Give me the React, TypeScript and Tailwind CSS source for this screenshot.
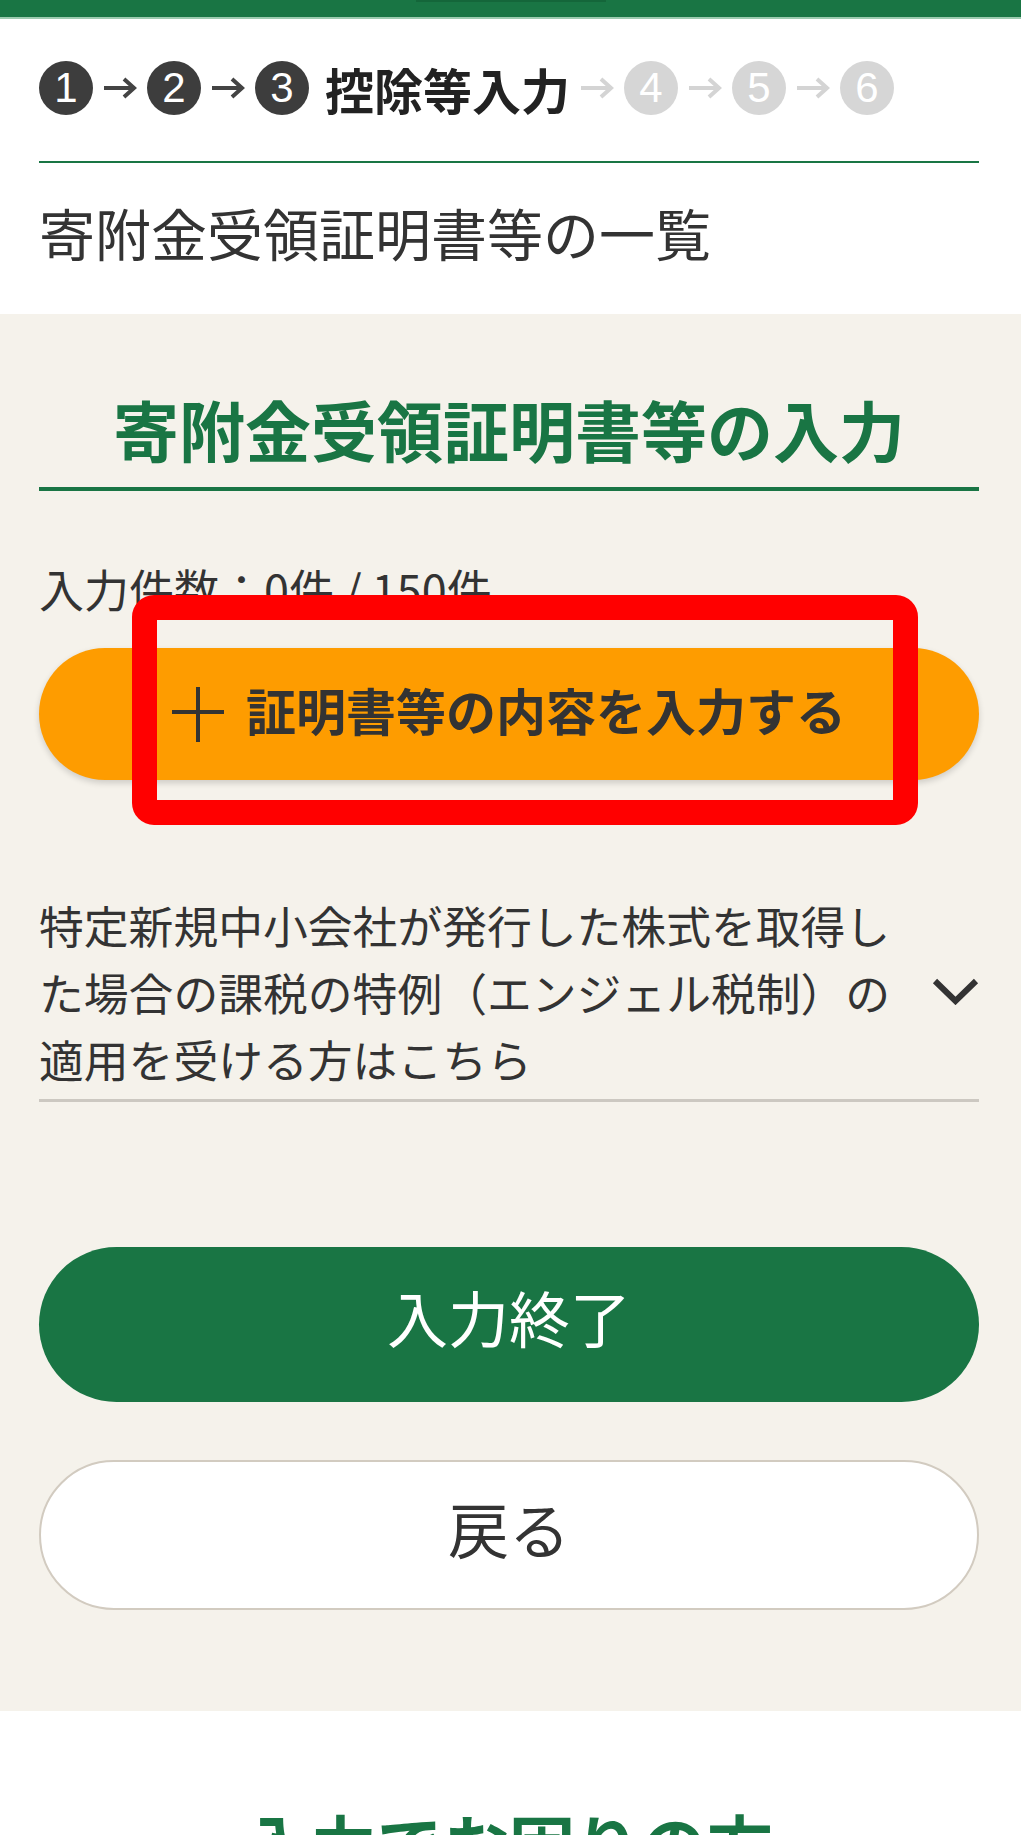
import { ReactNode } from "react";

const Step = ({ n, done }: { n: string; done?: boolean }) => {
    return (
        <span
            className={
                done
                    ? "flex h-[54px] w-[54px] shrink-0 items-center justify-center rounded-full bg-[#3d3d3d] font-['Liberation_Sans',sans-serif] text-[42px] leading-none text-white"
                    : "flex h-[54px] w-[54px] shrink-0 items-center justify-center rounded-full bg-[#d6d6d6] font-['Liberation_Sans',sans-serif] text-[42px] leading-none text-white"
            }
        >
            {n}
        </span>
    );
};

const Arrow = ({ light }: { light?: boolean }) => {
    return (
        <svg
            width="34"
            height="22"
            viewBox="0 0 34 22"
            className={light ? "mx-[10px] shrink-0 text-[#d4d4d4]" : "mx-[10px] shrink-0 text-[#444]"}
        >
            <path d="M1 11h30M21 2l10 9-10 9" fill="none" stroke="currentColor" strokeWidth="4" />
        </svg>
    );
};

const Pill = ({ className, children }: { className: string; children: ReactNode }) => {
    return (
        <button className={"flex w-full items-center justify-center rounded-full " + className}>
            {children}
        </button>
    );
};

export default function App() {
    return (
        <div className="min-h-[1835px] bg-white font-['Noto_Sans_CJK_JP',sans-serif] text-[#333]">
            {/* top bar */}
            <div className="relative h-[19px] border-b-2 border-[#9ccbb0] bg-[#197544]">
                <div className="mx-auto h-[2px] w-[190px] bg-[#14663a]" />
            </div>

            {/* steps + page title */}
            <div className="pl-[39px] pr-[42px] pt-[42px] pb-[38px]">
                <div className="flex items-center">
                    <Step n="1" done />
                    <Arrow />
                    <Step n="2" done />
                    <Arrow />
                    <Step n="3" done />
                    <span className="ml-[16px] text-[49px] font-bold leading-none text-[#222]">控除等入力</span>
                    <Arrow light />
                    <Step n="4" />
                    <Arrow light />
                    <Step n="5" />
                    <Arrow light />
                    <Step n="6" />
                </div>
                <div className="mt-[46px] h-[2px] bg-[#197544]" />
                <h1 className="mt-[27px] pb-[2px] text-[56px] font-normal leading-[84px]">寄附金受領証明書等の一覧</h1>
            </div>

            {/* main panel */}
            <div className="bg-[#f5f2eb] pl-[39px] pr-[42px] pt-[70px] pb-[101px]">
                <h2 className="border-b-4 border-[#197544] pb-[15px] text-center text-[66px] font-bold leading-[88px] text-[#197544]">
                    寄附金受領証明書等の入力
                </h2>

                <div className="relative mt-[64px]">
                    <p className="text-[45px] leading-[67px]">
                        入力件数：0件 / 150件
                    </p>
                    <Pill className="mt-[26px] h-[132px] gap-[22px] bg-[#fe9c00] shadow-[0_3px_6px_rgba(0,0,0,0.16)]">
                        <svg width="52" height="55" viewBox="0 0 52 55" className="shrink-0 text-[#333]">
                            <path d="M0 25h52M26 0v55" fill="none" stroke="currentColor" strokeWidth="4" />
                        </svg>
                        <span className="pb-[10px] text-[50px] font-bold leading-none text-[#333]">証明書等の内容を入力する</span>
                    </Pill>
                    {/* annotation frame */}
                    <div className="pointer-events-none absolute left-[93px] top-[40px] h-[230px] w-[786px] rounded-[22px] border-[25px] border-[#ff0000]" />
                </div>

                <div className="mt-[111px] flex items-center border-b-[3px] border-[#ccc8c1] pb-[7px]">
                    <p className="w-[870px] shrink-0 text-[44.8px] leading-[67px]">
                        特定新規中小会社が発行した株式を取得した場合の課税の特例（エンジェル税制）の適用を受ける方はこちら
                    </p>
                    <div className="flex flex-1 justify-end">
                        <svg width="47" height="27" viewBox="0 0 47 27" className="text-[#333]">
                            <path d="M3 3l20.5 20L44 3" fill="none" stroke="currentColor" strokeWidth="6" />
                        </svg>
                    </div>
                </div>

                <Pill className="mt-[145px] h-[155px] bg-[#197544]">
                    <span className="pb-[16px] text-[61px] leading-none text-white">入力終了</span>
                </Pill>
                <Pill className="mt-[58px] h-[150px] border-2 border-[#d2cbc0] bg-white">
                    <span className="pb-[16px] text-[61px] leading-none text-[#333]">戻る</span>
                </Pill>
            </div>

            {/* help section */}
            <div className="pl-[39px] pr-[42px] pt-[82px] pb-[40px]">
                <h2 className="text-center text-[66px] font-bold leading-[99px] text-[#197544]">入力でお困りの方</h2>
            </div>
        </div>
    );
}
